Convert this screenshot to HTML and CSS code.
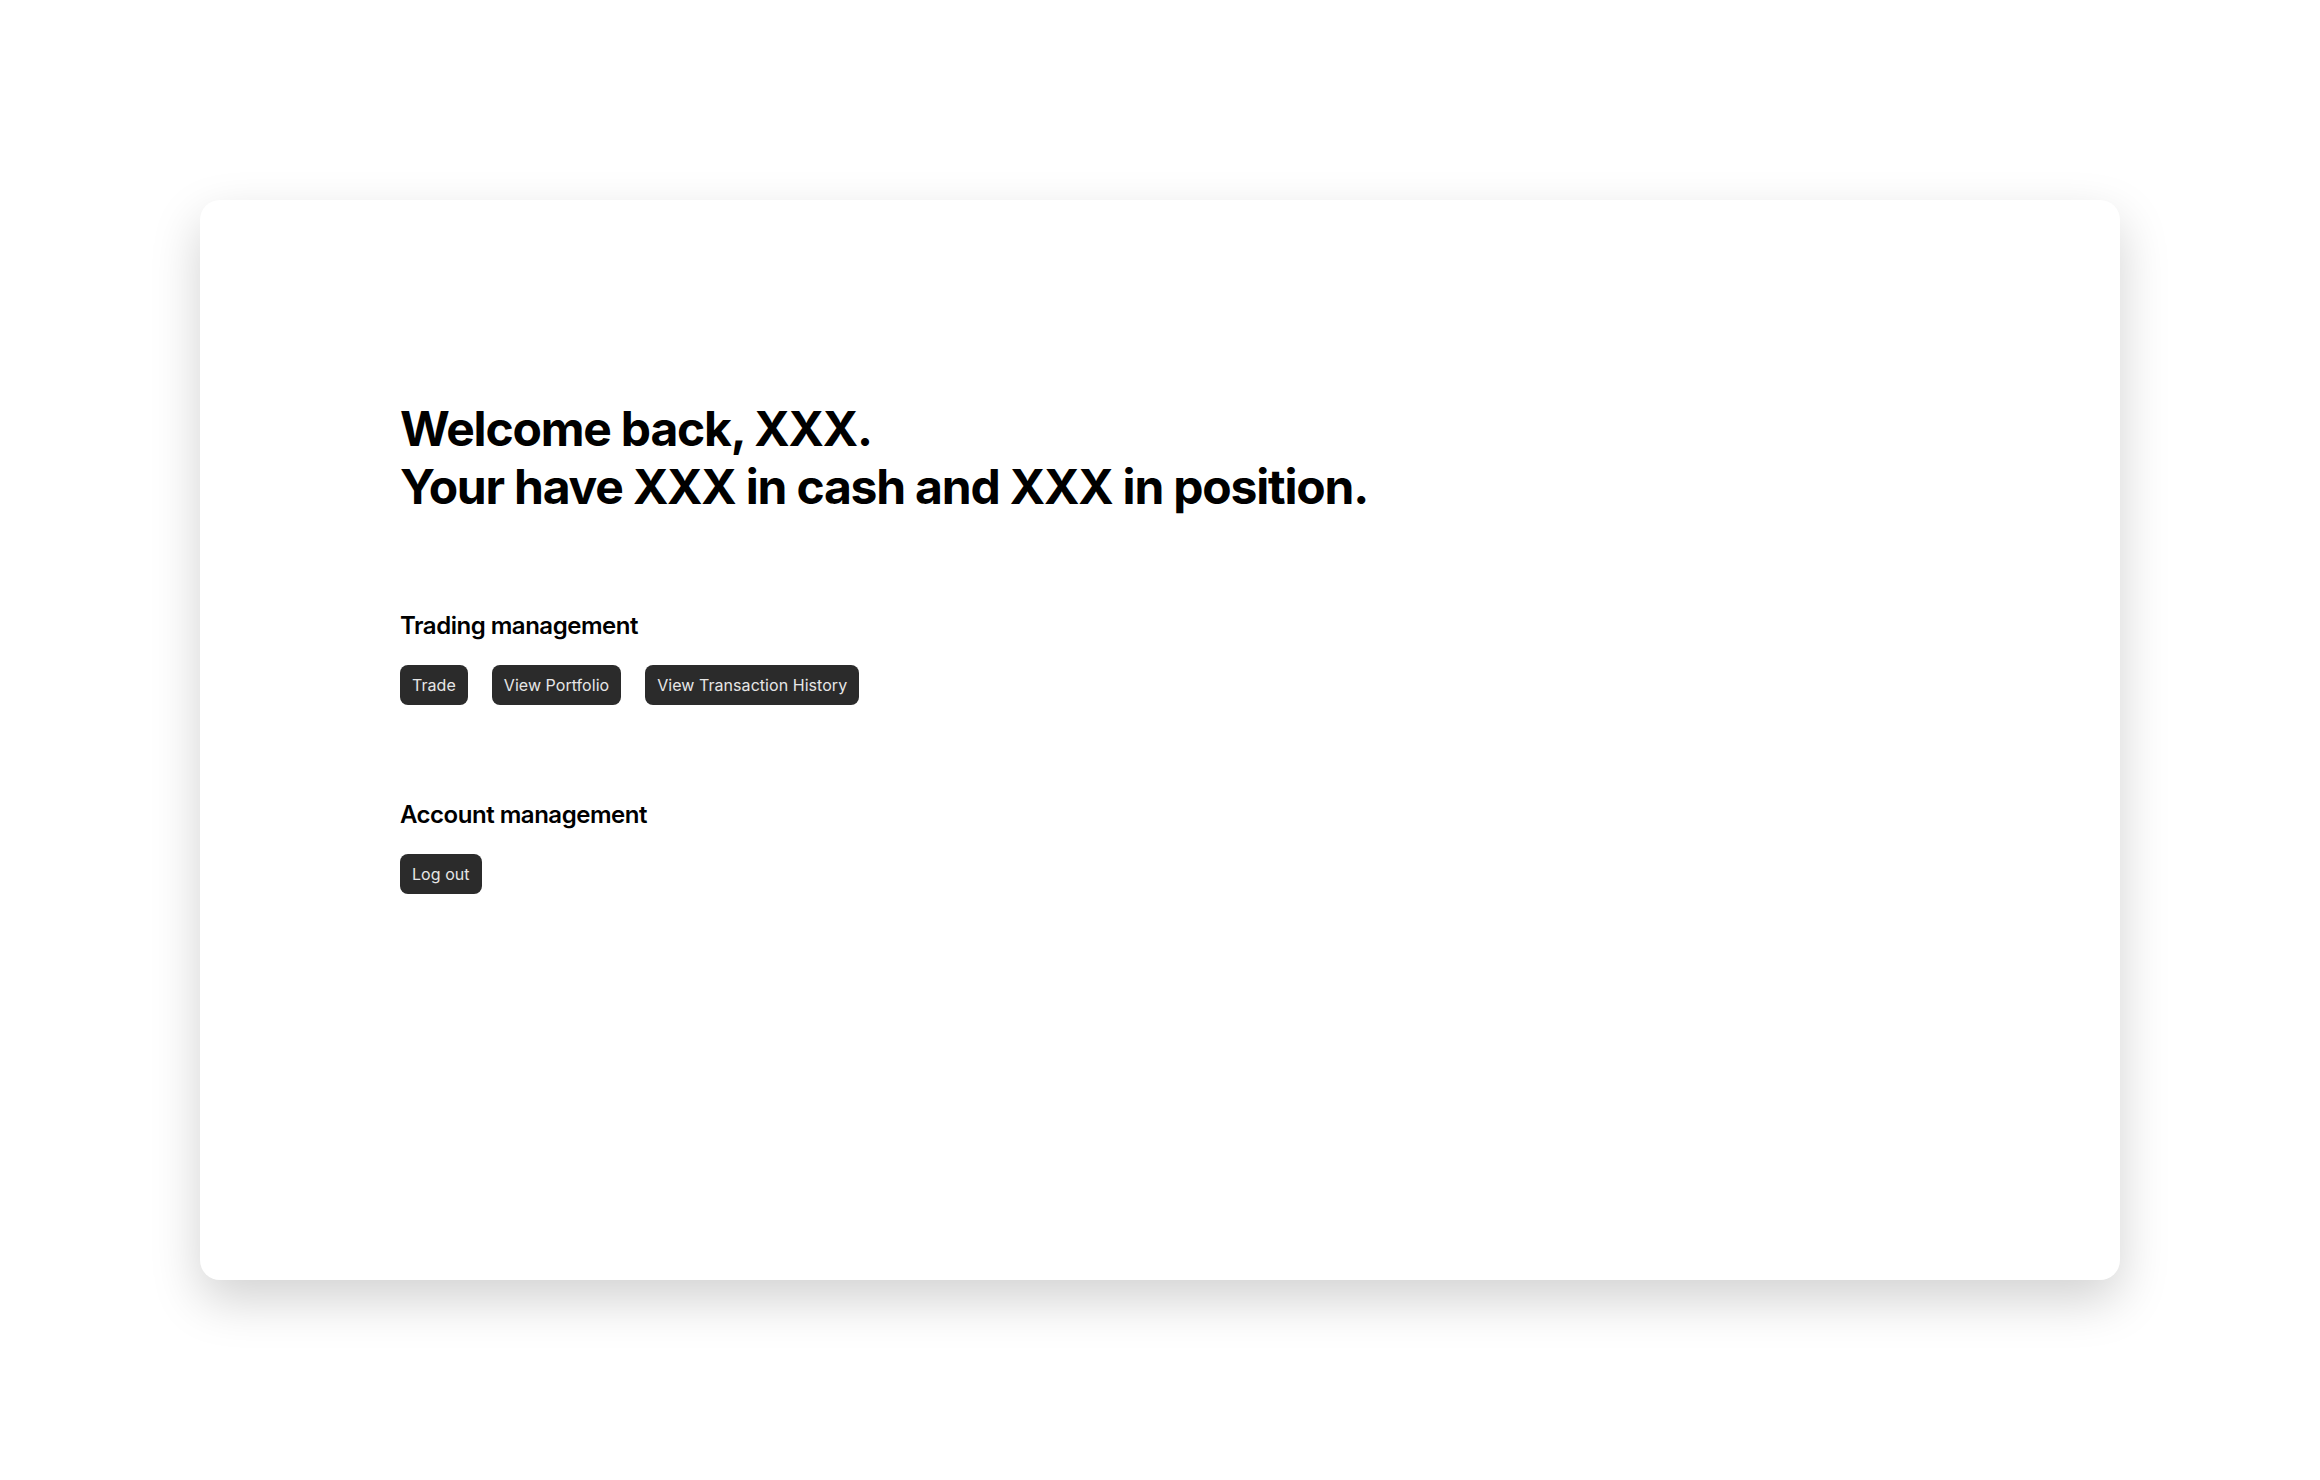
FILE: index.html
```html
<!DOCTYPE html>
<html lang="en">
<head>
<meta charset="utf-8">
<title>Dashboard</title>
<link rel="stylesheet" href="styles.css">
</head>
<body>
  <main class="card">
    <h1 class="welcome">Welcome back, XXX.<br>Your have XXX in cash and XXX in position.</h1>
    <section class="group">
      <h2 class="group-title">Trading management</h2>
      <div class="actions">
        <button class="btn">Trade</button>
        <button class="btn">View Portfolio</button>
        <button class="btn">View Transaction History</button>
      </div>
    </section>
    <section class="group">
      <h2 class="group-title">Account management</h2>
      <div class="actions">
        <button class="btn">Log out</button>
      </div>
    </section>
  </main>
</body>
</html>
```

FILE: styles.css
```css
html, body {
  margin: 0;
  background: #ffffff;
}
body {
  padding: 200px;
  font-family: Inter, "Noto Sans", sans-serif;
  color: #000;
}
.card {
  box-sizing: border-box;
  height: 1080px;
  background: #fff;
  border-radius: 20px;
  box-shadow: 0 20px 50px rgba(0, 0, 0, 0.18);
  padding: 200px 200px;
  display: flex;
  flex-direction: column;
}
.welcome {
  margin: 0 0 97px;
  font-size: 48px;
  line-height: 1.2;
  font-weight: 700;
  letter-spacing: -0.025em;
}
.group {
  display: flex;
  flex-direction: column;
  gap: 24px;
  margin-bottom: 96px;
}
.group-title {
  margin: 0;
  font-size: 24px;
  line-height: 1.2;
  font-weight: 600;
  letter-spacing: -0.02em;
}
.actions {
  display: flex;
  gap: 24px;
}
.btn {
  height: 40px;
  padding: 0 12px;
  border: 0;
  border-radius: 8px;
  background: #2b2b2b;
  color: #e6e6e6;
  font-family: Inter, "Noto Sans", sans-serif;
  font-size: 16px;
  font-weight: 400;
  letter-spacing: 0.003em;
}
```
